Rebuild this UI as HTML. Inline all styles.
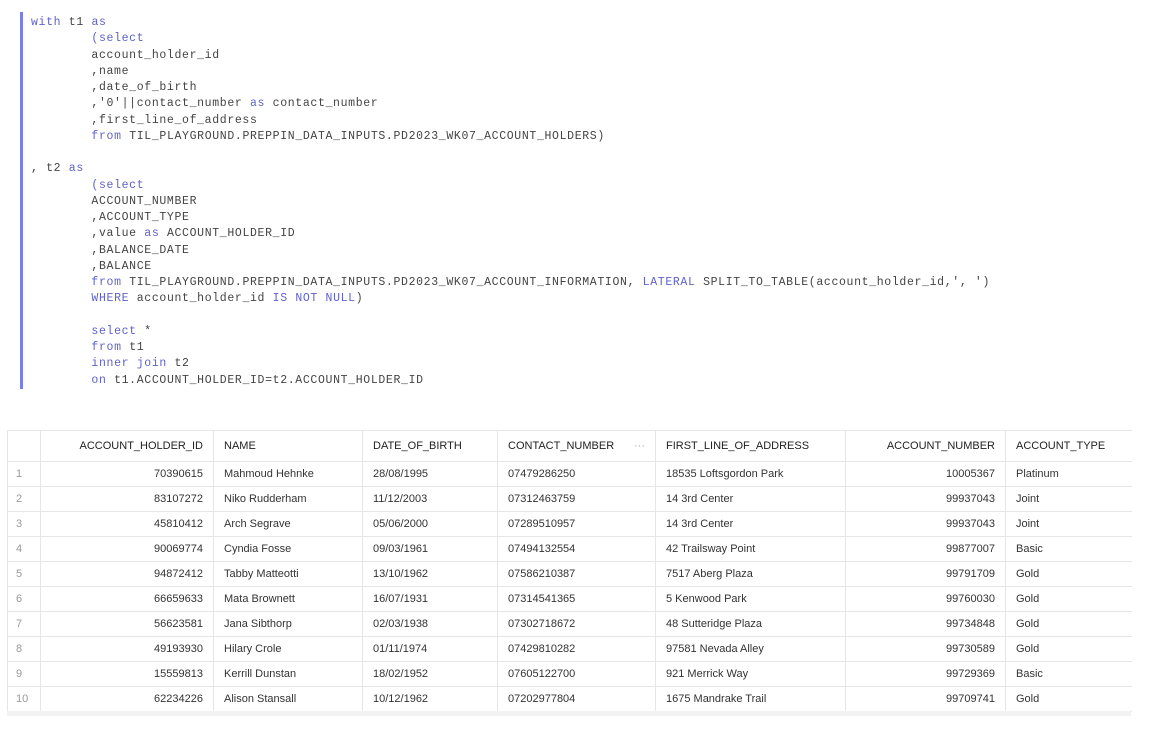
<!DOCTYPE html>
<html><head><style>
body{margin:0;background:#fff;width:1152px;height:730px;overflow:hidden;position:relative;font-family:"Liberation Sans",sans-serif}
.bar{position:absolute;left:20px;top:12px;width:3px;height:377px;background:#7c80e6}
pre{position:absolute;left:31px;top:15px;margin:0;font-family:"Liberation Mono",monospace;font-size:11.5px;letter-spacing:0.65px;line-height:16.25px;color:#444}
.k{color:#5f62c9}
table{position:absolute;left:7px;top:430px;border-collapse:collapse;font-size:11px;color:#333;table-layout:fixed;width:1124px}
td,th{border:1px solid #e6e6e6;padding:0 10px;height:24px;white-space:nowrap;overflow:hidden}
th{height:30px;font-weight:normal;color:#222;text-align:left}
.r{text-align:right}
td.n{color:#999;padding-left:8px}
tr>*:last-child{border-right:none}
.btm{position:absolute;left:7px;top:711px;width:1124px;height:5px;background:#f2f2f2}
</style></head><body>
<div class="bar"></div>
<pre><span class="k">with</span> t1 <span class="k">as</span>
        <span class="k">(select</span>
        account_holder_id
        ,name
        ,date_of_birth
        ,'0'||contact_number <span class="k">as</span> contact_number
        ,first_line_of_address
        <span class="k">from</span> TIL_PLAYGROUND.PREPPIN_DATA_INPUTS.PD2023_WK07_ACCOUNT_HOLDERS)

, t2 <span class="k">as</span>
        <span class="k">(select</span>
        ACCOUNT_NUMBER
        ,ACCOUNT_TYPE
        ,value <span class="k">as</span> ACCOUNT_HOLDER_ID
        ,BALANCE_DATE
        ,BALANCE
        <span class="k">from</span> TIL_PLAYGROUND.PREPPIN_DATA_INPUTS.PD2023_WK07_ACCOUNT_INFORMATION, <span class="k">LATERAL</span> SPLIT_TO_TABLE(account_holder_id,', ')
        <span class="k">WHERE</span> account_holder_id <span class="k">IS NOT NULL</span>)

        <span class="k">select</span> *
        <span class="k">from</span> t1
        <span class="k">inner join</span> t2
        <span class="k">on</span> t1.ACCOUNT_HOLDER_ID=t2.ACCOUNT_HOLDER_ID</pre>
<table>
<colgroup><col style="width:33px"><col style="width:173px"><col style="width:149px"><col style="width:135px"><col style="width:158px"><col style="width:190px"><col style="width:160px"><col style="width:126px"></colgroup>
<tr><th></th><th class="r">ACCOUNT_HOLDER_ID</th><th>NAME</th><th>DATE_OF_BIRTH</th><th>CONTACT_NUMBER <span style="float:right;color:#aaa">···</span></th><th>FIRST_LINE_OF_ADDRESS</th><th class="r">ACCOUNT_NUMBER</th><th>ACCOUNT_TYPE</th></tr>
<tr><td class="n">1</td><td class="r">70390615</td><td>Mahmoud Hehnke</td><td>28/08/1995</td><td>07479286250</td><td>18535 Loftsgordon Park</td><td class="r">10005367</td><td>Platinum</td></tr>
<tr><td class="n">2</td><td class="r">83107272</td><td>Niko Rudderham</td><td>11/12/2003</td><td>07312463759</td><td>14 3rd Center</td><td class="r">99937043</td><td>Joint</td></tr>
<tr><td class="n">3</td><td class="r">45810412</td><td>Arch Segrave</td><td>05/06/2000</td><td>07289510957</td><td>14 3rd Center</td><td class="r">99937043</td><td>Joint</td></tr>
<tr><td class="n">4</td><td class="r">90069774</td><td>Cyndia Fosse</td><td>09/03/1961</td><td>07494132554</td><td>42 Trailsway Point</td><td class="r">99877007</td><td>Basic</td></tr>
<tr><td class="n">5</td><td class="r">94872412</td><td>Tabby Matteotti</td><td>13/10/1962</td><td>07586210387</td><td>7517 Aberg Plaza</td><td class="r">99791709</td><td>Gold</td></tr>
<tr><td class="n">6</td><td class="r">66659633</td><td>Mata Brownett</td><td>16/07/1931</td><td>07314541365</td><td>5 Kenwood Park</td><td class="r">99760030</td><td>Gold</td></tr>
<tr><td class="n">7</td><td class="r">56623581</td><td>Jana Sibthorp</td><td>02/03/1938</td><td>07302718672</td><td>48 Sutteridge Plaza</td><td class="r">99734848</td><td>Gold</td></tr>
<tr><td class="n">8</td><td class="r">49193930</td><td>Hilary Crole</td><td>01/11/1974</td><td>07429810282</td><td>97581 Nevada Alley</td><td class="r">99730589</td><td>Gold</td></tr>
<tr><td class="n">9</td><td class="r">15559813</td><td>Kerrill Dunstan</td><td>18/02/1952</td><td>07605122700</td><td>921 Merrick Way</td><td class="r">99729369</td><td>Basic</td></tr>
<tr><td class="n">10</td><td class="r">62234226</td><td>Alison Stansall</td><td>10/12/1962</td><td>07202977804</td><td>1675 Mandrake Trail</td><td class="r">99709741</td><td>Gold</td></tr>
</table>
<div class="btm"></div>
</body></html>
